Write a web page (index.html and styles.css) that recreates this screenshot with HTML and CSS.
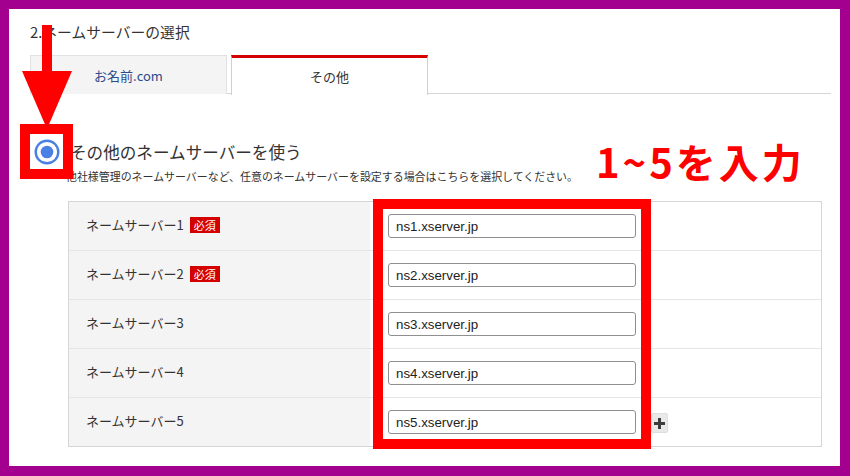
FILE: index.html
```html
<!DOCTYPE html>
<html lang="ja">
<head>
<meta charset="utf-8">
<title>ネームサーバーの選択</title>
<link rel="stylesheet" href="styles.css">
</head>
<body>
<div class="frame">
  <div class="panel">
    <h2 class="title">2.ネームサーバーの選択</h2>
    <div class="tabs">
      <div class="tab tab-off">お名前.com</div>
      <div class="tab tab-on">その他</div>
    </div>
    <div class="option">
      <div class="option-head">
        <svg class="radio" width="26" height="26" viewBox="0 0 26 26">
          <circle cx="13" cy="13" r="11.3" fill="#fff" stroke="#4a7fe3" stroke-width="2.4"/>
          <circle cx="13" cy="13" r="6.3" fill="#4a7fe3"/>
        </svg>
        <span class="option-title">その他のネームサーバーを使う</span>
      </div>
      <p class="option-desc">他社様管理のネームサーバーなど、任意のネームサーバーを設定する場合はこちらを選択してください。</p>
      <div class="ns-table">
        <div class="ns-row">
          <div class="ns-label">ネームサーバー1<span class="badge">必須</span></div>
          <div class="ns-field"><input class="ns-input" type="text" value="ns1.xserver.jp"></div>
        </div>
        <div class="ns-row">
          <div class="ns-label">ネームサーバー2<span class="badge">必須</span></div>
          <div class="ns-field"><input class="ns-input" type="text" value="ns2.xserver.jp"></div>
        </div>
        <div class="ns-row">
          <div class="ns-label">ネームサーバー3</div>
          <div class="ns-field"><input class="ns-input" type="text" value="ns3.xserver.jp"></div>
        </div>
        <div class="ns-row">
          <div class="ns-label">ネームサーバー4</div>
          <div class="ns-field"><input class="ns-input" type="text" value="ns4.xserver.jp"></div>
        </div>
        <div class="ns-row ns-row-last">
          <div class="ns-label">ネームサーバー5</div>
          <div class="ns-field">
            <input class="ns-input" type="text" value="ns5.xserver.jp">
            <span class="add-btn">
              <svg width="11" height="11" viewBox="0 0 11 11"><rect x="4" y="0" width="3" height="11" fill="#3c3c3c"/><rect x="0" y="4" width="11" height="3" fill="#3c3c3c"/></svg>
            </span>
          </div>
        </div>
      </div>
    </div>

    <svg class="anno-arrow" width="50" height="104" viewBox="0 0 50 104">
      <rect x="20" y="0" width="10" height="48" fill="#ff0000"/>
      <polygon points="0,46 50,46 25,104" fill="#ff0000"/>
    </svg>
    <div class="anno-box anno-radio"></div>
    <div class="anno-box anno-inputs"></div>
    <div class="anno-text">1~5を入力</div>
  </div>
</div>
</body>
</html>
```

FILE: styles.css
```css
* { box-sizing: border-box; }
html, body { margin: 0; padding: 0; }
body {
  font-family: "Noto Sans CJK JP", "Noto Sans", sans-serif;
  color: #333;
  background: #a4008f;
}
.frame {
  width: 850px;
  height: 476px;
  padding: 9px 10px 10px 9px;
  background: #a4008f;
}
.panel {
  position: relative;
  width: 831px;
  height: 457px;
  background: #fff;
  padding: 13px 9px 0 21px;
  overflow: hidden;
}
.title {
  margin: 0;
  font-size: 14.8px;
  line-height: 20px;
  font-weight: normal;
  color: #333;
}
.tabs {
  margin-top: 13px;
  display: flex;
  gap: 4px;
  border-bottom: 1px solid #d6d6d6;
  height: 39px;
}
.tab {
  width: 197px;
  height: 39px;
  display: flex;
  align-items: center;
  justify-content: center;
  font-size: 13px;
}
.tab-off {
  background: #f4f4f4;
  border: 1px solid #e2e2e2;
  border-bottom: none;
  color: #2d4a8a;
}
.tab-on {
  background: #fff;
  border-top: 3px solid #d40000;
  border-left: 1px solid #d0d0d0;
  border-right: 1px solid #d0d0d0;
  height: 40px;
  color: #333;
}
.option {
  margin-top: 46px;
}
.option-head {
  display: flex;
  align-items: center;
  gap: 10px;
  padding-left: 4px;
  height: 24px;
}
.radio { display: block; flex: none; }
.option-title {
  font-size: 16.6px;
  line-height: 24px;
  color: #333;
}
.option-desc {
  margin: 5px 0 0 36px;
  font-size: 10.95px;
  line-height: 14px;
  color: #333;
}
.ns-table {
  margin: 18px 0 0 38px;
  width: 754px;
  border: 1px solid #d6d6d6;
}
.ns-row {
  display: grid;
  grid-template-columns: 301px 1fr;
  height: 49px;
  border-bottom: 1px solid #e6e6e6;
}
.ns-row-last { border-bottom: none; height: 48px; }
.ns-label {
  background: #f4f4f4;
  display: flex;
  align-items: center;
  padding-left: 17px;
  font-size: 13px;
  color: #333;
  padding-bottom: 3px;
}
.badge {
  margin-left: 6px;
  background: #d40000;
  color: #fff;
  font-size: 11px;
  line-height: 16px;
  padding: 0 4px;
}
.ns-field {
  display: flex;
  align-items: center;
  padding-left: 18px;
  gap: 15px;
}
.ns-input {
  width: 248px;
  height: 24px;
  border: 1px solid #8f8f8f;
  border-radius: 3px;
  padding: 0 7px;
  font-family: "Liberation Sans", Arial, sans-serif;
  font-size: 13.3px;
  color: #222;
  background: #fff;
  outline: none;
}
.add-btn {
  width: 17px;
  height: 20px;
  background: #e9e9e9;
  border: 1px solid #dedede;
  border-radius: 2px;
  display: flex;
  align-items: center;
  justify-content: center;
  margin-top: 2px;
}
.add-btn svg { display: block; }

/* annotation overlays */
.anno-arrow {
  position: absolute;
  left: 13px;
  top: 16px;
}
.anno-box {
  position: absolute;
  border: 10px solid #ff0000;
}
.anno-radio {
  left: 11px;
  top: 115px;
  width: 53px;
  height: 55px;
}
.anno-inputs {
  left: 364px;
  top: 190px;
  width: 278px;
  height: 250px;
}
.anno-text {
  position: absolute;
  left: 587px;
  top: 124px;
  font-size: 40px;
  line-height: 56px;
  font-weight: bold;
  letter-spacing: 3px;
  color: #ff0000;
  white-space: nowrap;
}
```
